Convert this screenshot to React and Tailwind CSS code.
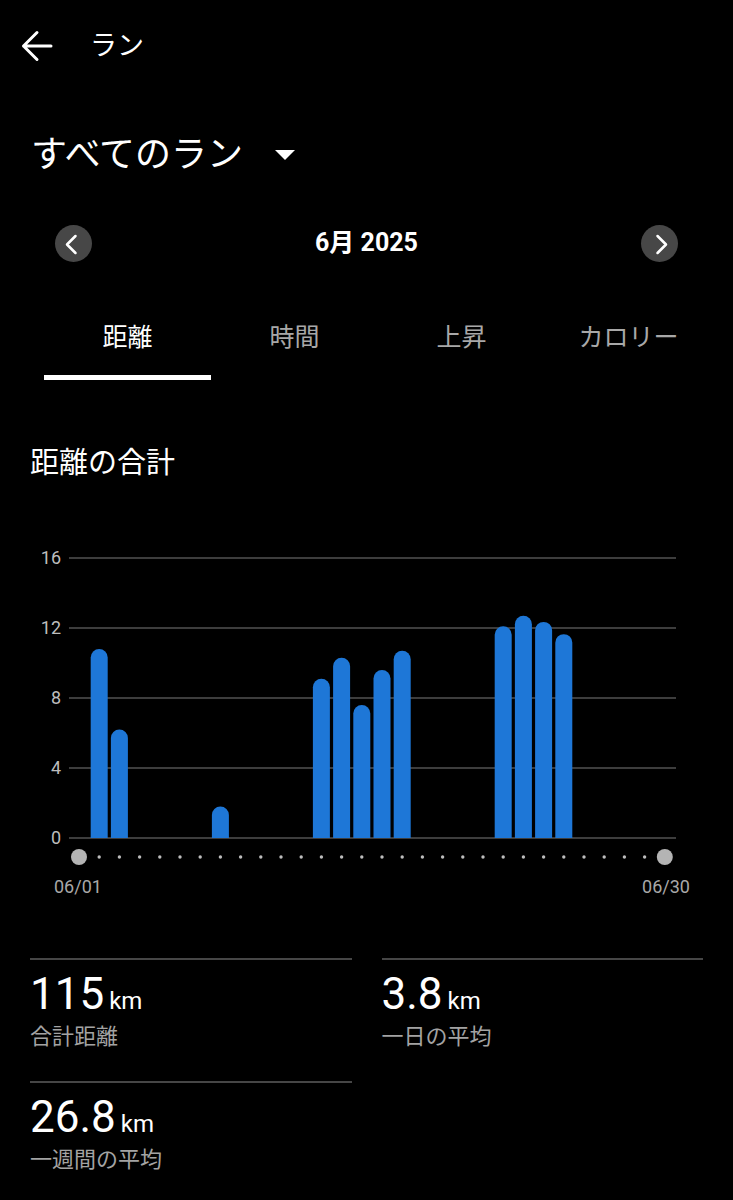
import React from "react";

const FONT = { fontFamily: 'Roboto, "Noto Sans CJK JP", sans-serif' };

// day index (0 = 06/01) -> distance km
const runs = [
  [1, 10.8], [2, 6.2], [7, 1.8],
  [12, 9.1], [13, 10.3], [14, 7.6], [15, 9.6], [16, 10.7],
  [21, 12.1], [22, 12.7], [23, 12.35], [24, 11.65],
];

const tabs = ["距離", "時間", "上昇", "カロリー"];

const dayX = (i) => 10 + 20.2 * i;
const PX_PER_KM = 17.5;
const BASE = 290;

const Bar = ({ day, km }) => {
  const x = dayX(day);
  const top = BASE - km * PX_PER_KM;
  const r = 8.5;
  return (
    <path
      d={`M${x - r} ${BASE} V${top + r} A${r} ${r} 0 0 1 ${x + r} ${top + r} V${BASE} Z`}
      fill="#1e77d7"
    />
  );
};

const Stat = ({ value, label, last }) => (
  <div className={`border-t-2 border-[#464646] pt-2 ${last ? "" : "pb-[30px]"}`}>
    <div className="flex items-baseline text-white">
      <span className="text-[44px] leading-[52px]">{value}</span>
      <span className="ml-[5px] text-[24px]">km</span>
    </div>
    <div className="mt-[3px] text-[22px] leading-7 text-[#a3a3a3]">{label}</div>
  </div>
);

const App = () => {
  return (
    <div className="min-h-[1200px] w-[733px] bg-black text-white" style={FONT}>
      {/* header */}
      <div className="flex h-[92px] items-center pl-[21px]">
        <svg width="32" height="32" viewBox="0 0 32 32" fill="none" stroke="white" strokeWidth="3" strokeLinecap="round" strokeLinejoin="round">
          <path d="M30 16H2.5M16 2.5L2.5 16L16 29.5" />
        </svg>
        <span className="ml-[37px] text-[27px] leading-8">ラン</span>
      </div>

      {/* activity filter */}
      <div className="mt-[38px] flex h-[50px] items-center pl-[31px]">
        <span className="text-[36px] leading-[50px]">すべてのラン</span>
        <svg className="ml-[32px]" width="20" height="10" viewBox="0 0 20 10">
          <path d="M0 0H20L10 10Z" fill="white" />
        </svg>
      </div>

      {/* month switcher */}
      <div className="mt-[44px] flex h-[38px] items-center justify-between pl-[55px] pr-[55px]">
        <button className="flex h-[37px] w-[37px] items-center justify-center rounded-full bg-[#474747]">
          <svg width="37" height="37" viewBox="0 0 37 37" fill="none" stroke="white" strokeWidth="2.5" strokeLinecap="round" strokeLinejoin="round">
            <path d="M20.5 11L12 19.5L20.5 28" />
          </svg>
        </button>
        <span className="text-[25px] font-bold leading-8">6月 2025</span>
        <button className="flex h-[37px] w-[37px] items-center justify-center rounded-full bg-[#474747]">
          <svg width="37" height="37" viewBox="0 0 37 37" fill="none" stroke="white" strokeWidth="2.5" strokeLinecap="round" strokeLinejoin="round">
            <path d="M16.5 11L25 19.5L16.5 28" />
          </svg>
        </button>
      </div>

      {/* tabs */}
      <div className="ml-[44px] mt-[60px] grid w-[668px] grid-cols-4">
        {tabs.map((t, i) => (
          <div key={t} className="flex flex-col items-center">
            <span className={`text-[25px] leading-8 ${i === 0 ? "text-white" : "text-[#a8a8a8]"}`}>{t}</span>
            <div className={`mt-[21px] h-[5px] w-full ${i === 0 ? "bg-white" : "bg-transparent"}`} />
          </div>
        ))}
      </div>

      {/* chart */}
      <div className="mt-[63px] pl-[30px] text-[29px] leading-10">距離の合計</div>

      <div className="mt-[65px] flex pl-[30px]">
        <div className="flex h-[300px] w-[31px] flex-col justify-between text-right text-[18px] leading-5 text-[#bdbdbd]">
          {[16, 12, 8, 4, 0].map((v) => (
            <span key={v}>{v}</span>
          ))}
        </div>
        <svg className="ml-[8px]" width="607" height="320" viewBox="0 0 607 320">
          {[10, 80, 150, 220, 290].map((y) => (
            <line key={y} x1="0" x2="607" y1={y} y2={y} stroke="#3d3d3d" strokeWidth="2" />
          ))}
          {runs.map(([d, km]) => (
            <Bar key={d} day={d} km={km} />
          ))}
          {Array.from({ length: 30 }, (_, i) =>
            i === 0 || i === 29 ? (
              <circle key={i} cx={dayX(i)} cy="309" r="8" fill="#b4b4b4" />
            ) : (
              <circle key={i} cx={dayX(i)} cy="309" r="1.7" fill="#bdbdbd" />
            )
          )}
        </svg>
      </div>
      <div className="ml-[54px] mt-2 flex w-[636px] justify-between text-[18px] leading-[22px] text-[#a8a8a8]">
        <span>06/01</span>
        <span>06/30</span>
      </div>

      {/* stats */}
      <div className="mt-[60px] grid grid-cols-2 gap-x-[30px] px-[30px]">
        <Stat value="115" label="合計距離" />
        <Stat value="3.8" label="一日の平均" />
        <Stat value="26.8" label="一週間の平均" last />
      </div>
    </div>
  );
};

export default App;
